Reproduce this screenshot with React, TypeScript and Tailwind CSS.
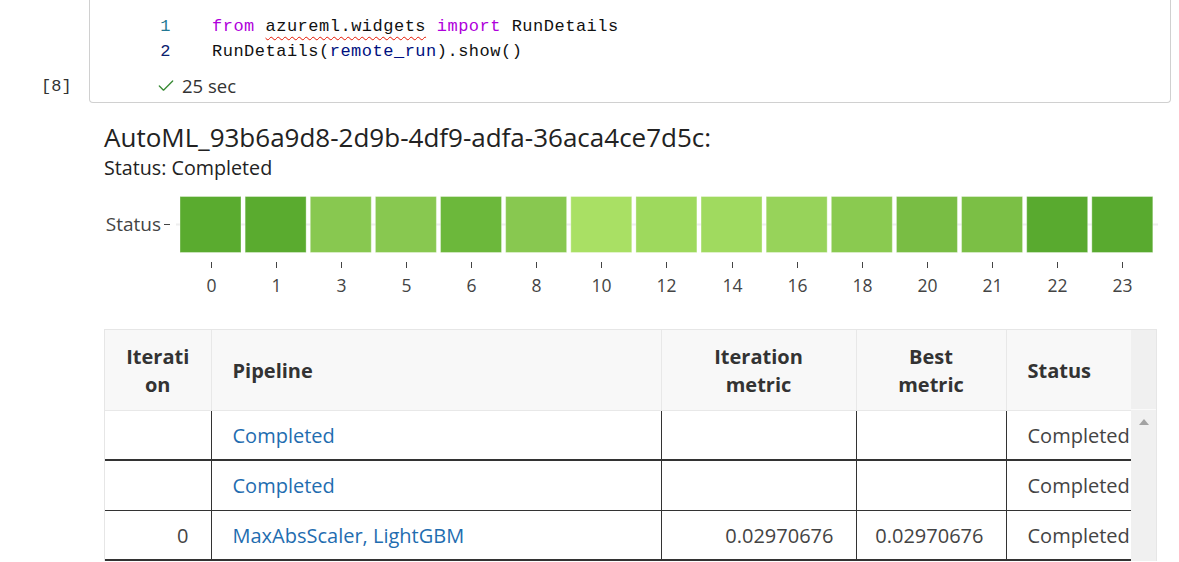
import React from 'react';
import { Check } from 'lucide-react';

const sans = "font-['Open_Sans','Noto_Sans',sans-serif]";
const mono = "font-['Liberation_Mono','DejaVu_Sans_Mono',monospace]";

const bars = [
  { label: '0', color: '#5aab2f' },
  { label: '1', color: '#5aab2f' },
  { label: '3', color: '#88c850' },
  { label: '5', color: '#88c850' },
  { label: '6', color: '#6cb83b' },
  { label: '8', color: '#88c850' },
  { label: '10', color: '#a9e064' },
  { label: '12', color: '#9ed95d' },
  { label: '14', color: '#a0da5f' },
  { label: '16', color: '#97d35a' },
  { label: '18', color: '#8aca50' },
  { label: '20', color: '#79bd44' },
  { label: '21', color: '#7bbf45' },
  { label: '22', color: '#59aa2f' },
  { label: '23', color: '#59aa2f' },
];

const rows = [
  { it: '', pipeline: 'Completed', im: '', bm: '', status: 'Completed', line: 'border-b-2' },
  { it: '', pipeline: 'Completed', im: '', bm: '', status: 'Completed', line: 'border-b' },
  { it: '0', pipeline: 'MaxAbsScaler, LightGBM', im: '0.02970676', bm: '0.02970676', status: 'Completed', line: 'border-b-2' },
];

function StatusChart() {
  const step = 65.13;
  return (
    <svg width="1060" height="110" className="block">
      <text x="57" y="41" textAnchor="end" fontSize="19" fill="#444" fontFamily="Open Sans, Noto Sans, sans-serif">
        Status
      </text>
      <line x1="60" y1="34.5" x2="66" y2="34.5" stroke="#444" strokeWidth="1" />
      <line x1="72" y1="34.5" x2="1054" y2="34.5" stroke="#eeeeee" strokeWidth="2" />
      {bars.map((b, i) => {
        const x = 76 + step * i;
        const cx = Math.round(x + 30.5) + 0.5;
        return (
          <g key={b.label}>
            <rect x={x} y={6.5} width={61} height={56} fill={b.color} stroke="rgba(255,255,255,0.35)" strokeWidth="1" />
            <line x1={cx} y1="72" x2={cx} y2="78" stroke="#444" strokeWidth="1" />
            <text x={cx} y="102" textAnchor="middle" fontSize="17.5" fill="#444" fontFamily="Open Sans, Noto Sans, sans-serif">
              {b.label}
            </text>
          </g>
        );
      })}
    </svg>
  );
}

export default function App() {
  return (
    <div className={`w-[1179px] h-[562px] overflow-hidden bg-white ${sans}`}>
      {/* code cell */}
      <div className="flex h-[103px]">
        <div className={`w-[89px] flex flex-col justify-end pb-[4px] pl-[41px] text-[17px] text-[#333] ${mono}`}>
          [8]
        </div>
        <div className="w-[1082px] border-x border-b border-[#d0d0d0] rounded-b-[4px] pt-[14px]">
          <div className={`flex h-[25px] leading-[25px] text-[17px] tracking-[0.5px] ${mono}`}>
            <span className="w-[81px] text-right text-[#237893]">1</span>
            <span className="ml-[41px] whitespace-pre">
              <span className="text-[#af00db]">from</span>{' '}
              <span className="text-[#111] underline decoration-wavy decoration-[#e51400] decoration-1 underline-offset-[5px]">
                azureml.widgets
              </span>{' '}
              <span className="text-[#af00db]">import</span> <span className="text-[#111]">RunDetails</span>
            </span>
          </div>
          <div className={`flex h-[25px] leading-[25px] text-[17px] tracking-[0.5px] ${mono}`}>
            <span className="w-[81px] text-right text-[#0b216f]">2</span>
            <span className="ml-[41px] whitespace-pre text-[#111]">
              RunDetails(<span className="text-[#001080]">remote_run</span>).show()
            </span>
          </div>
          <div className="flex items-center h-[24px] mt-[10px] pl-[66px] gap-[6px] text-[18.5px] text-[#333]">
            <Check className="w-[20px] h-[20px] text-[#388a34]" strokeWidth={1.6} />
            <span>25 sec</span>
          </div>
        </div>
      </div>

      {/* output */}
      <div className="pl-[104px]">
        <div className="mt-[17px] text-[26px] leading-[34px] text-[#222]">AutoML_93b6a9d8-2d9b-4df9-adfa-36aca4ce7d5c:</div>
        <div className="text-[19.7px] leading-[28px] text-[#222]">Status: Completed</div>
        <div className="mt-[8px]">
          <StatusChart />
        </div>

        <div className="mt-[29px] flex w-[1053px] border-t border-l border-r border-[#e6e6e6]">
          <table className="w-[1026px] table-fixed border-collapse text-[20px]">
            <colgroup>
              <col className="w-[106px]" />
              <col className="w-[450px]" />
              <col className="w-[195px]" />
              <col className="w-[150px]" />
              <col className="w-[125px]" />
            </colgroup>
            <thead>
              <tr className="h-[80px] bg-[#f8f8f8] font-bold text-[#333] leading-[28px]">
                <th className="border-r border-b border-[#e8e8e8] text-center font-bold pt-[3px]">
                  Iterati
                  <br />
                  on
                </th>
                <th className="border-r border-b border-[#e8e8e8] text-left pl-[21px] font-bold pt-[3px]">Pipeline</th>
                <th className="border-r border-b border-[#e8e8e8] text-center font-bold pt-[3px]">
                  Iteration
                  <br />
                  metric
                </th>
                <th className="border-r border-b border-[#e8e8e8] text-center font-bold pt-[3px]">
                  Best
                  <br />
                  metric
                </th>
                <th className="border-b border-[#e8e8e8] text-left pl-[21px] font-bold pt-[3px]">Status</th>
              </tr>
            </thead>
            <tbody>
              {rows.map((r, i) => (
                <tr key={i} className={`h-[50px] ${r.line} border-[#333]`}>
                  <td className="border-r border-[#333] text-right pr-[22px] text-[#444] pt-[2px]">{r.it}</td>
                  <td className="border-r border-[#333] pl-[21px] text-[#1f6db0] whitespace-nowrap pt-[2px]">{r.pipeline}</td>
                  <td className="border-r border-[#333] text-right pr-[22px] text-[#444] pt-[2px]">{r.im}</td>
                  <td className="border-r border-[#333] text-right pr-[22px] text-[#444] pt-[2px]">{r.bm}</td>
                  <td className="pl-[21px] text-[#444] whitespace-nowrap overflow-hidden pt-[2px]">{r.status}</td>
                </tr>
              ))}
            </tbody>
          </table>
          <div className="w-[26px] bg-[#f0f0f0] flex flex-col">
            <div className="h-[80px] border-b border-[#fafafa]" />
            <div className="flex justify-center pt-[9px]">
              <div className="w-0 h-0 border-l-[5px] border-r-[5px] border-b-[6px] border-l-transparent border-r-transparent border-b-[#a3a3a3]" />
            </div>
          </div>
        </div>
      </div>
    </div>
  );
}
